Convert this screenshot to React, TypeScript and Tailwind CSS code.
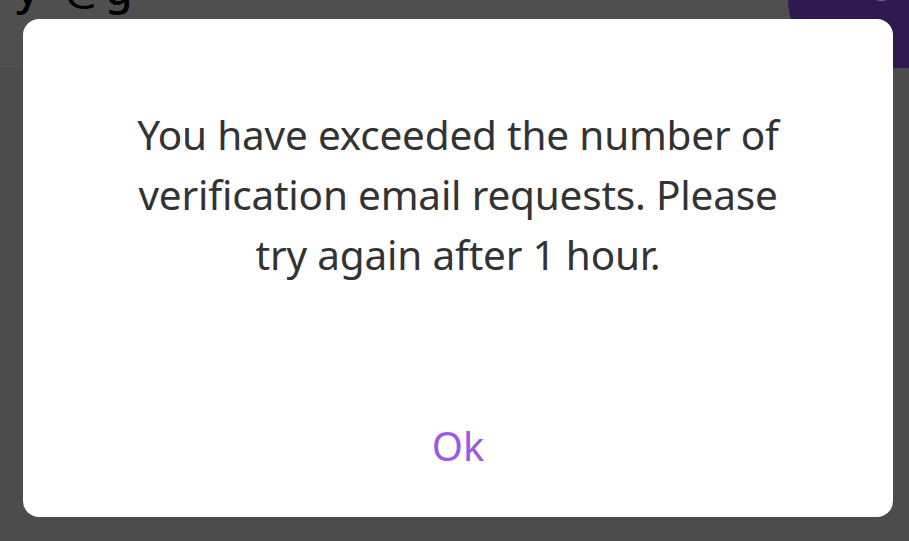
export default function App() {
  return (
    <div
      className="relative w-full h-[541px] overflow-hidden bg-[#4c4c4c]"
      style={{ fontFamily: '"Noto Sans", "Open Sans", sans-serif' }}
    >
      <div className="relative h-[67px] bg-[#4f4f4f] border-b border-[#555555]">
        <div className="absolute left-[16px] top-[-34px] text-[44px] font-medium leading-none text-black tracking-[0.02em]">
          y&nbsp;&nbsp;@g
        </div>
        <div className="absolute left-[788px] top-[-70px] w-[220px] h-[138px] rounded-[70px] bg-[#2e1a50]">
          <span className="absolute left-[80px] top-[30px] text-[46px] leading-none text-[#6f6585]">0</span>
        </div>
      </div>

      <div className="absolute left-[23px] top-[19px] w-[870px] h-[498px] rounded-[16px] bg-white flex flex-col items-center">
        <p className="mt-[86px] w-[665px] text-center text-[40.5px] leading-[60px] text-[#333333] tracking-[-0.005em]">
          You have exceeded the number of verification email requests. Please try again after 1 hour.
        </p>
        <div className="flex-1" />
        <button className="mb-[41px] text-[40px] leading-[60px] text-[#9a5ae6]">Ok</button>
      </div>
    </div>
  );
}
